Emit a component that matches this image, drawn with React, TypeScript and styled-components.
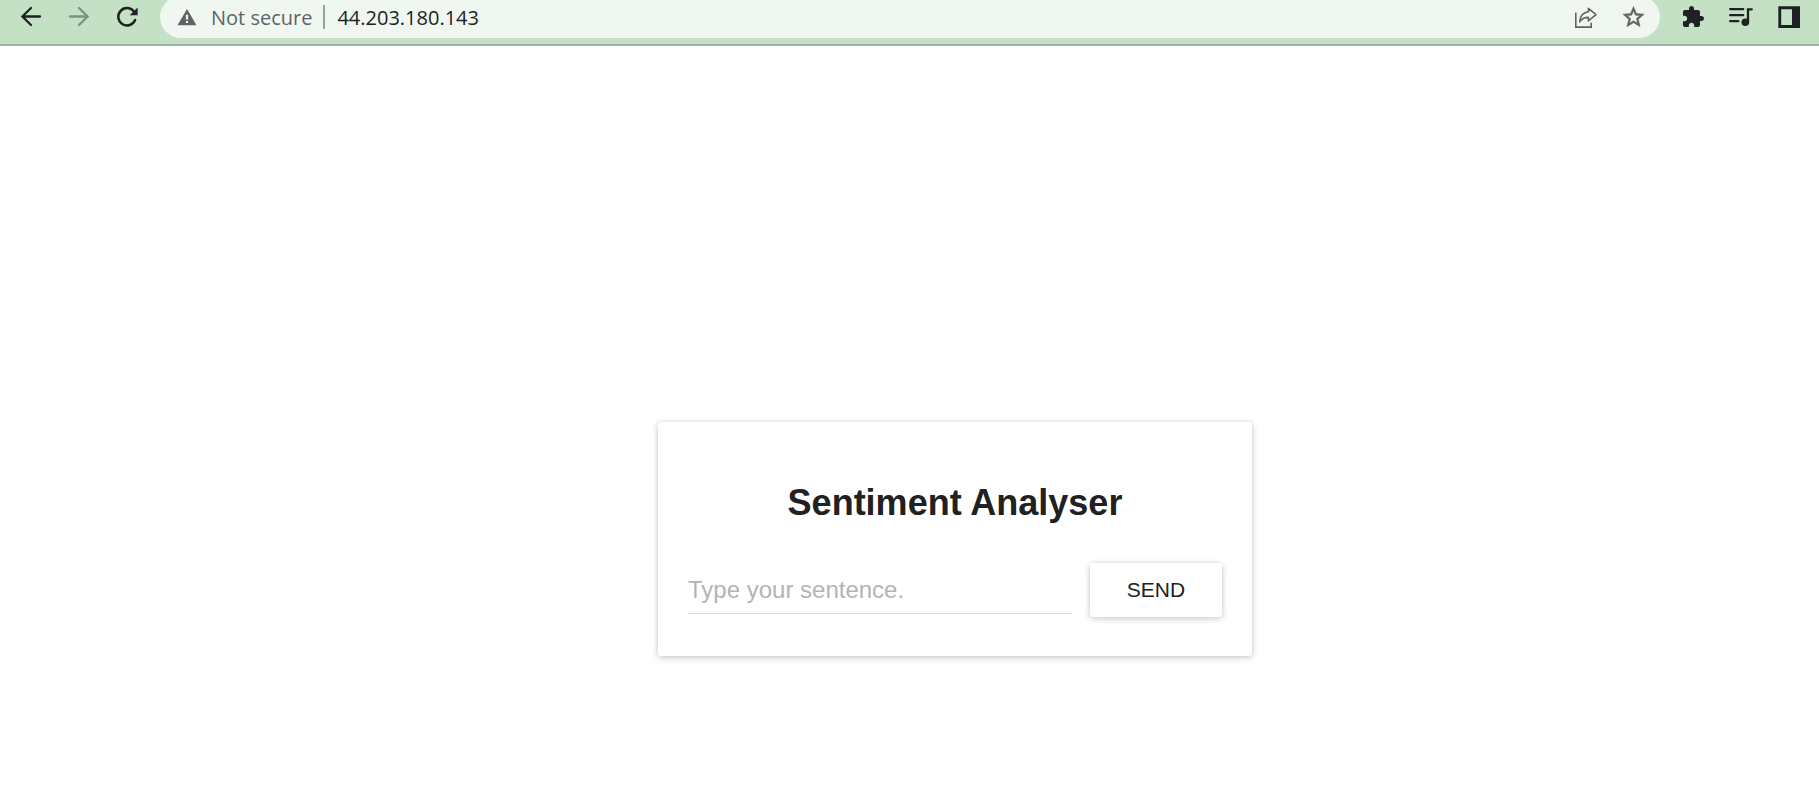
import React from "react";
import styled, { createGlobalStyle } from "styled-components";

const GlobalStyle = createGlobalStyle`
  *, *::before, *::after { box-sizing: border-box; }
  body {
    margin: 0;
    background: #fff;
    color: #212121;
    font-family: "Liberation Sans", Arial, sans-serif;
  }
`;

const Page = styled.div`
  display: flow-root;
`;

const Toolbar = styled.header`
  display: flex;
  align-items: center;
  gap: 21px;
  margin-top: -4px;
  padding: 0 18px 6px 19px;
  background: #c5e1c5;
  border-bottom: 2px solid #9fb5a3;
`;

const ButtonGroup = styled.div`
  display: flex;
  gap: 24px;
`;

const IconButton = styled.button<{ $color?: string }>`
  display: flex;
  flex: none;
  padding: 0;
  border: 0;
  background: none;
  color: ${(p) => p.$color ?? "#202124"};
  cursor: pointer;
`;

const Omnibox = styled.div`
  display: flex;
  flex: 1;
  align-items: center;
  min-width: 0;
  height: 42px;
  padding: 0 14px 0 15px;
  border-radius: 21px;
  background: #f0f7f1;
  font-family: "Open Sans", "Noto Sans", sans-serif;
  font-size: 20px;
`;

const SecurityButton = styled.button`
  display: flex;
  flex: none;
  align-items: center;
  gap: 12px;
  padding: 0;
  border: 0;
  background: none;
  color: #5f6368;
  font: inherit;
  cursor: pointer;
`;

const Divider = styled.span`
  width: 2px;
  height: 24px;
  margin: 0 12px 0 11px;
  background: #9aa09c;
`;

const Address = styled.input`
  flex: 1;
  min-width: 0;
  padding: 0;
  border: 0;
  outline: 0;
  background: none;
  color: #202124;
  font: inherit;
`;

const Main = styled.main`
  display: flex;
  justify-content: center;
  padding: 376px 0 40px 91px;
`;

const Card = styled.section`
  display: flex;
  flex-direction: column;
  gap: 39px;
  width: 100%;
  max-width: 594px;
  padding: 60px 30px 39px;
  border-radius: 3px;
  background: #fff;
  box-shadow: 0 2px 7px rgba(0, 0, 0, 0.16), 0 0 5px rgba(0, 0, 0, 0.1);
`;

const Title = styled.h1`
  margin: 0;
  font-size: 36px;
  line-height: 42px;
  text-align: center;
`;

const Form = styled.form`
  display: flex;
  align-items: center;
  gap: 18px;
`;

const SentenceInput = styled.input`
  flex: 1;
  min-width: 0;
  height: 48px;
  padding: 0;
  border: 0;
  border-bottom: 1px solid #dadada;
  outline: 0;
  background: none;
  color: #212121;
  font: inherit;
  font-size: 24px;

  &::placeholder {
    color: #b4b4b4;
    opacity: 1;
  }
`;

const SendButton = styled.button`
  width: 132px;
  height: 54px;
  border: 0;
  border-radius: 3px;
  background: #fff;
  box-shadow: 0 2px 7px rgba(0, 0, 0, 0.16), 0 0 5px rgba(0, 0, 0, 0.1);
  color: #212121;
  font: inherit;
  font-size: 21px;
  text-transform: uppercase;
  cursor: pointer;
`;

const Icon = ({ children }: { children: React.ReactNode }) => (
  <svg width="24" height="24" viewBox="0 0 24 24" fill="none" aria-hidden="true">
    {children}
  </svg>
);

const stroke = { stroke: "currentColor", strokeWidth: 2.3, strokeLinecap: "round" as const };

const BackIcon = () => (
  <Icon>
    <path d="M21 11.5H3.5M12 3L3.4 11.5L12 20" {...stroke} />
  </Icon>
);

const ForwardIcon = () => (
  <Icon>
    <path d="M3 11.5H20.5M12 3L20.6 11.5L12 20" {...stroke} />
  </Icon>
);

const ReloadIcon = () => (
  <Icon>
    <path d="M18.7 6.2A8.7 8.7 0 1 0 20.1 15" {...stroke} strokeWidth={2.5} />
    <path d="M22.6 2.6V10.2H14.6Z" fill="currentColor" />
  </Icon>
);

const WarningIcon = () => (
  <Icon>
    <path
      fillRule="evenodd"
      d="M12 4L21.5 20.2H2.5ZM10.9 9.8V14.4H13.1V9.8ZM10.9 16V18.1H13.1V16Z"
      fill="currentColor"
    />
  </Icon>
);

const ShareIcon = () => (
  <Icon>
    <path d="M1.8 7.5V22.1H17.2V17.8" stroke="currentColor" strokeWidth="1.6" />
    <path
      d="M14.4 3.3L22 9.6L14.4 15.9V12.4C10.3 12.4 7.6 13.7 5.7 16.8C6.1 11.5 9 7.4 14.4 6.8Z"
      stroke="currentColor"
      strokeWidth="1.6"
      strokeLinejoin="round"
    />
  </Icon>
);

const StarIcon = () => (
  <Icon>
    <path
      transform="translate(-1.2 -.6) scale(1.06)"
      d="M22 9.24l-7.19-.62L12 2 9.19 8.63 2 9.24l5.46 4.73L5.82 21 12 17.27 18.18 21l-1.63-7.03L22 9.24zM12 15.4l-3.76 2.27 1-4.28-3.32-2.88 4.38-.38L12 6.1l1.71 4.04 4.38.38-3.32 2.88 1 4.28L12 15.4z"
      fill="currentColor"
      stroke="currentColor"
      strokeWidth="0.5"
    />
  </Icon>
);

const ExtensionIcon = () => (
  <Icon>
    <path
      d="M20.5 11H19V7c0-1.1-.9-2-2-2h-4V3.5C13 2.12 11.88 1 10.5 1S8 2.12 8 3.5V5H4c-1.1 0-1.99.9-1.99 2v3.8H3.5c1.49 0 2.7 1.21 2.7 2.7s-1.21 2.7-2.7 2.7H2V20c0 1.1.9 2 2 2h3.8v-1.5c0-1.49 1.21-2.7 2.7-2.7 1.49 0 2.7 1.21 2.7 2.7V22H17c1.1 0 2-.9 2-2v-4h1.5c1.38 0 2.5-1.12 2.5-2.5S21.88 11 20.5 11z"
      fill="currentColor"
    />
  </Icon>
);

const MediaIcon = () => (
  <Icon>
    <path d="M1.2 4.2H14.2M1.2 10.2H14.2M1.2 16.2H9.4" {...stroke} />
    <path d="M19 17.5V4.3H22.8" {...stroke} />
    <circle cx="16.3" cy="17.3" r="3.8" fill="currentColor" />
  </Icon>
);

const SidePanelIcon = () => (
  <Icon>
    <path fillRule="evenodd" d="M1.3 1.2H23V23H1.3ZM4.2 4.2V20H15V4.2Z" fill="currentColor" />
  </Icon>
);

export default function App() {
  return (
    <Page>
      <GlobalStyle />
      <Toolbar>
        <ButtonGroup>
          <IconButton type="button" aria-label="Back">
            <BackIcon />
          </IconButton>
          <IconButton type="button" aria-label="Forward" $color="#7f917f">
            <ForwardIcon />
          </IconButton>
          <IconButton type="button" aria-label="Reload">
            <ReloadIcon />
          </IconButton>
        </ButtonGroup>
        <Omnibox>
          <SecurityButton type="button">
            <WarningIcon />
            Not secure
          </SecurityButton>
          <Divider />
          <Address type="text" aria-label="Address" defaultValue="44.203.180.143" />
          <ButtonGroup>
            <IconButton type="button" aria-label="Share" $color="#5f6368">
              <ShareIcon />
            </IconButton>
            <IconButton type="button" aria-label="Bookmark" $color="#5f6368">
              <StarIcon />
            </IconButton>
          </ButtonGroup>
        </Omnibox>
        <ButtonGroup>
          <IconButton type="button" aria-label="Extensions">
            <ExtensionIcon />
          </IconButton>
          <IconButton type="button" aria-label="Media controls">
            <MediaIcon />
          </IconButton>
          <IconButton type="button" aria-label="Side panel">
            <SidePanelIcon />
          </IconButton>
        </ButtonGroup>
      </Toolbar>
      <Main>
        <Card>
          <Title>Sentiment Analyser</Title>
          <Form onSubmit={(e) => e.preventDefault()}>
            <SentenceInput type="text" aria-label="Sentence" placeholder="Type your sentence." />
            <SendButton type="submit">Send</SendButton>
          </Form>
        </Card>
      </Main>
    </Page>
  );
}
